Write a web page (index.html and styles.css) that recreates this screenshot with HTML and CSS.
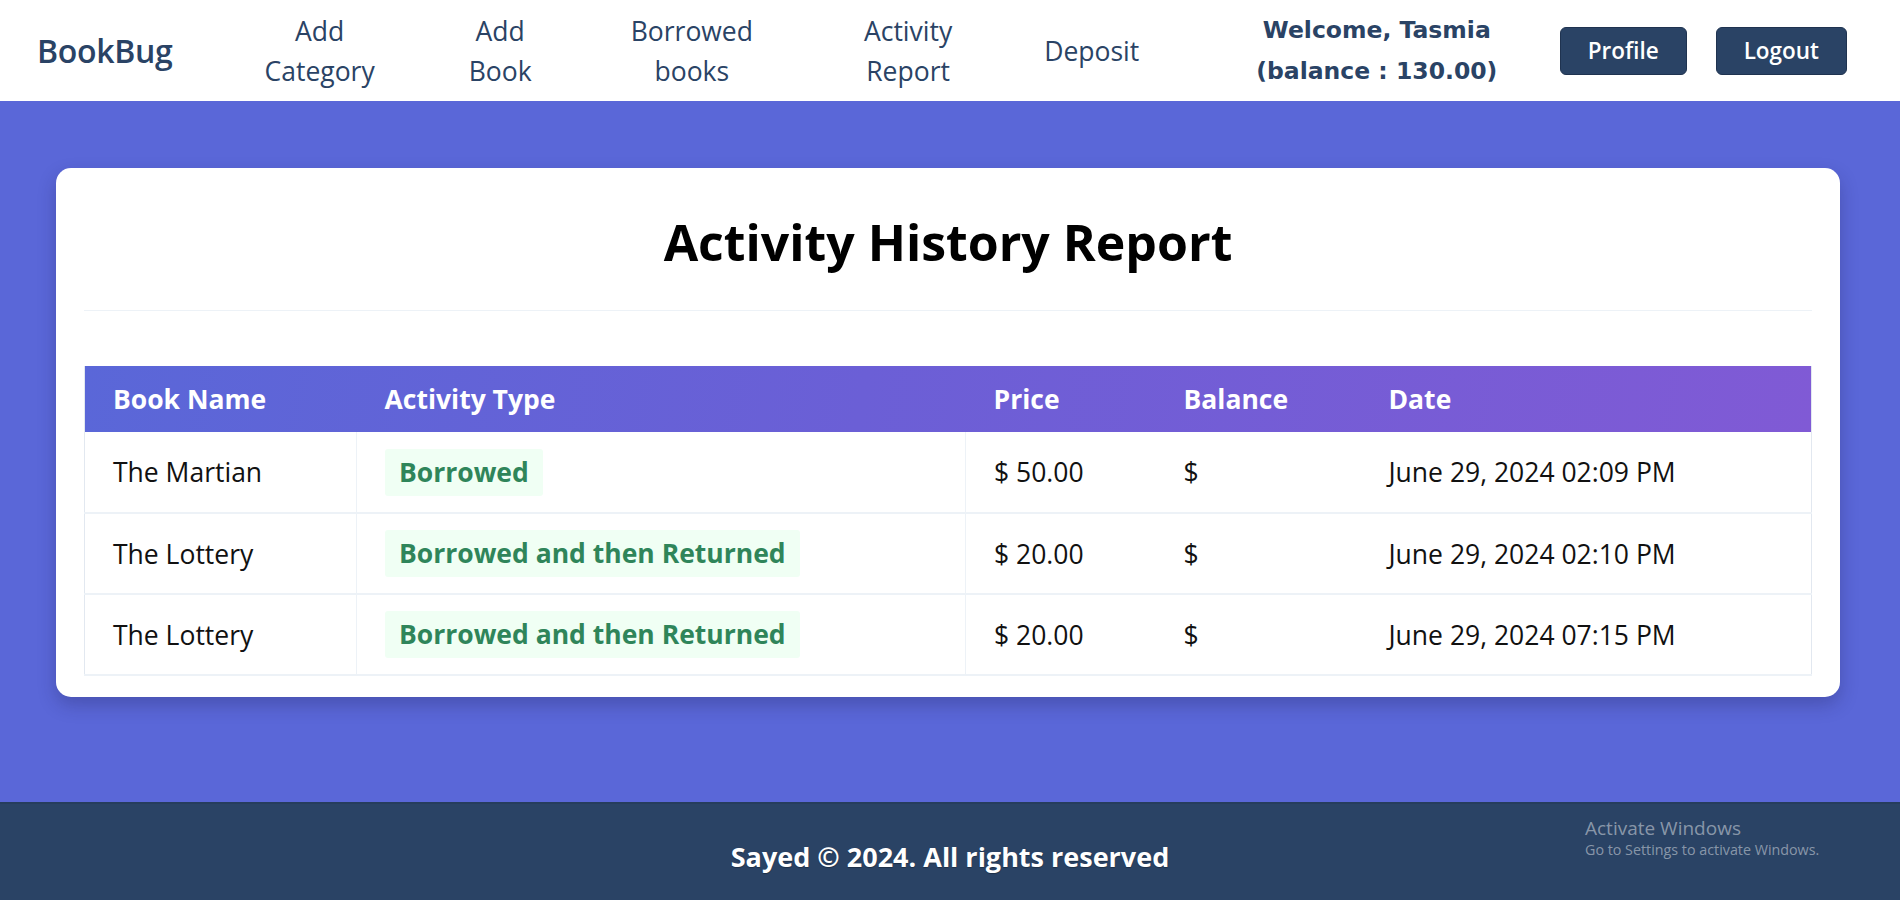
FILE: index.html
```html
<!DOCTYPE html>
<html lang="en">
<head>
<meta charset="utf-8">
<title>BookBug - Activity Report</title>
<link rel="stylesheet" href="styles.css">
</head>
<body>
<header class="navbar">
  <a class="brand" href="#">BookBug</a>
  <nav class="links">
    <a class="nav-link" href="#">Add<br>Category</a>
    <a class="nav-link" href="#">Add<br>Book</a>
    <a class="nav-link" href="#">Borrowed<br>books</a>
    <a class="nav-link" href="#">Activity<br>Report</a>
    <a class="nav-link" href="#">Deposit</a>
  </nav>
  <div class="welcome">Welcome, Tasmia<br>(balance : 130.00)</div>
  <div class="actions">
    <a class="btn" href="#">Profile</a>
    <a class="btn" href="#">Logout</a>
  </div>
</header>

<main class="main">
  <section class="card">
    <h1 class="title">Activity History Report</h1>
    <table class="report">
      <colgroup>
        <col class="c-name">
        <col class="c-type">
        <col class="c-price">
        <col class="c-bal">
        <col class="c-date">
      </colgroup>
      <thead>
        <tr>
          <th>Book Name</th>
          <th>Activity Type</th>
          <th>Price</th>
          <th>Balance</th>
          <th>Date</th>
        </tr>
      </thead>
      <tbody>
        <tr>
          <td class="lined">The Martian</td>
          <td class="lined"><span class="badge">Borrowed</span></td>
          <td>$ 50.00</td>
          <td>$</td>
          <td>June 29, 2024 02:09 PM</td>
        </tr>
        <tr>
          <td class="lined">The Lottery</td>
          <td class="lined"><span class="badge">Borrowed and then Returned</span></td>
          <td>$ 20.00</td>
          <td>$</td>
          <td>June 29, 2024 02:10 PM</td>
        </tr>
        <tr>
          <td class="lined">The Lottery</td>
          <td class="lined"><span class="badge">Borrowed and then Returned</span></td>
          <td>$ 20.00</td>
          <td>$</td>
          <td>June 29, 2024 07:15 PM</td>
        </tr>
      </tbody>
    </table>
  </section>
</main>

<footer class="footer">
  <p class="copy">Sayed © 2024. All rights reserved</p>
  <div class="activate">
    <div class="act-title">Activate Windows</div>
    <div class="act-sub">Go to Settings to activate Windows.</div>
  </div>
</footer>
</body>
</html>
```

FILE: styles.css
```css
* { box-sizing: border-box; }

html, body {
  margin: 0;
  padding: 0;
}

body {
  font-family: "Open Sans", "Noto Sans", "Liberation Sans", sans-serif;
  min-height: 100vh;
  display: flex;
  flex-direction: column;
  background: #5a67d8;
  color: #000;
}

a { text-decoration: none; }

/* ---------- navbar ---------- */
.navbar {
  height: 101px;
  flex: none;
  background: #ffffff;
  display: flex;
  align-items: center;
  padding: 0 53px 0 37px;
}

.brand {
  font-size: 32px;
  font-weight: 600;
  color: #2a4365;
  letter-spacing: -0.3px;
  margin-right: 42px;
}

.links {
  display: flex;
  align-items: center;
}

.nav-link {
  font-size: 26.5px;
  line-height: 40px;
  color: #2a4365;
  text-align: center;
  padding: 0 50px;
}

.nav-link:nth-child(2) { padding-left: 44px; }
.nav-link:nth-child(3) { padding-left: 49px; }
.nav-link:nth-child(4) { padding-left: 61px; }
.nav-link:nth-child(5) { padding-left: 42px; }

.welcome {
  font-family: "DejaVu Sans", "Verdana", sans-serif;
  font-weight: 700;
  font-size: 23.5px;
  line-height: 41px;
  color: #2a4365;
  text-align: center;
  margin-left: 67px;
}

.actions {
  display: flex;
  gap: 29px;
  margin-left: auto;
}

.btn {
  display: inline-flex;
  align-items: center;
  justify-content: center;
  height: 48px;
  padding: 0 27px;
  background: #2a4365;
  border: 1px solid #1f3350;
  border-radius: 6px;
  color: #ffffff;
  font-size: 22.5px;
  font-weight: 600;
}

/* ---------- main ---------- */
.main {
  flex: 1;
  padding: 67px 60px 105px 56px;
}

.card {
  background: #ffffff;
  border-radius: 15px;
  padding: 44px 28px 21px;
  box-shadow: 0 8px 18px rgba(30, 30, 80, 0.28);
}

.title {
  margin: 0 0 55px;
  font-size: 50px;
  line-height: 60px;
  font-weight: 700;
  text-align: center;
  padding: 0 0 38px;
  border-bottom: 1px solid #edf2f7;
}

/* ---------- table ---------- */
.report {
  width: 100%;
  border-collapse: collapse;
  table-layout: fixed;
  border-left: 1px solid #e2e8f0;
  border-right: 1px solid #e2e8f0;
}

.c-name { width: 272px; }
.c-type { width: 609px; }
.c-price { width: 190px; }
.c-bal { width: 205px; }
.c-date { width: auto; }

.report thead tr {
  background: linear-gradient(100deg, #5a67d8 0%, #6b5fd6 45%, #805ad5 100%);
}

.report th {
  height: 66px;
  padding: 0 28px;
  text-align: left;
  color: #ffffff;
  font-size: 26.5px;
  font-weight: 700;
}

.report td {
  height: 81px;
  padding: 0 28px;
  font-size: 26.5px;
  color: #111111;
  border-bottom: 2px solid #edf2f7;
}

.report td.lined {
  border-right: 1px solid #edf2f7;
}

.badge {
  display: inline-block;
  padding: 7px 14px;
  background: #f0fff4;
  color: #2f855a;
  font-weight: 700;
  border-radius: 3px;
  line-height: 33px;
}

/* ---------- footer ---------- */
.footer {
  position: relative;
  flex: none;
  height: 98px;
  background: #2a4365;
  border-top: 2px solid #263d5c;
  display: flex;
  align-items: center;
  justify-content: center;
}

.copy {
  margin: 8px 0 0;
  color: #ffffff;
  font-size: 27px;
  font-weight: 700;
  text-shadow: 0 1px 1px rgba(0, 0, 0, 0.3);
}

.activate {
  position: absolute;
  left: 1585px;
  top: 13px;
  color: rgba(255, 255, 255, 0.45);
}

.act-title {
  font-size: 19px;
  line-height: 23px;
}

.act-sub {
  font-size: 14.3px;
  line-height: 20px;
}
```
